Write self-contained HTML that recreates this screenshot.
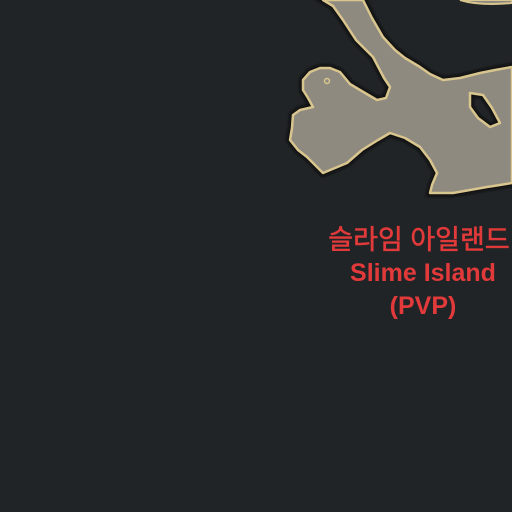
<html><head><style>
body{margin:0;width:512px;height:512px;background:#212427;overflow:hidden;position:relative}
.t{position:absolute;left:293px;width:260px;text-align:center;color:#e23a3a;font-family:"Liberation Sans","Noto Sans CJK KR",sans-serif;font-weight:bold;white-space:nowrap;line-height:30px}
</style></head><body>
<svg width="512" height="512" style="position:absolute;left:0;top:0">
<defs><filter id="b"><feGaussianBlur stdDeviation="1.2"/></filter></defs>
<g>
<path d="M323,0 L333,6 L343,20 L356,40 L373,57 L384,78 L390,87 L386,98 L377,100 L360,90 L350,84 L340,72 L330,68 L320,68 L310,72 L303,80 L303,90 L308,98 L313,107 L300,110 L293,115 L292,128 L290,140 L298,150 L307,157 L315,165 L323,173 L335,168 L347,163 L362,150 L378,140 L390,133 L405,138 L420,147 L430,160 L437,173 L432,185 L430,193 L453,193 L470,190 L487,187 L500,185 L512,183 L512,67 L495,70 L480,73 L460,78 L443,80 L430,74 L420,67 L405,58 L395,50 L383,37 L372,18 L363,0 Z M470,93 L483,95 L492,108 L500,123 L490,127 L478,118 L470,107 Z" fill="#111" fill-rule="evenodd" stroke="#111" stroke-width="7" filter="url(#b)"/>
<path d="M323,0 L333,6 L343,20 L356,40 L373,57 L384,78 L390,87 L386,98 L377,100 L360,90 L350,84 L340,72 L330,68 L320,68 L310,72 L303,80 L303,90 L308,98 L313,107 L300,110 L293,115 L292,128 L290,140 L298,150 L307,157 L315,165 L323,173 L335,168 L347,163 L362,150 L378,140 L390,133 L405,138 L420,147 L430,160 L437,173 L432,185 L430,193 L453,193 L470,190 L487,187 L500,185 L512,183 L512,67 L495,70 L480,73 L460,78 L443,80 L430,74 L420,67 L405,58 L395,50 L383,37 L372,18 L363,0 Z M470,93 L483,95 L492,108 L500,123 L490,127 L478,118 L470,107 Z" fill="#8e8a7f" fill-rule="evenodd" stroke="#d9c58e" stroke-width="2.5" stroke-linejoin="round"/>
<circle cx="327" cy="81" r="2.5" fill="none" stroke="#d9c58e" stroke-width="1.5"/>
<path d="M460,0 Q480,6 512,3 L512,0 Z" fill="#8e8a7f" stroke="#d9c58e" stroke-width="2"/>
</g>
</svg>
<div class="t" style="top:225px;font-size:27px;left:289px;font-weight:normal;-webkit-text-stroke:0.6px #e23a3a">슬라임 아일랜드</div>
<div class="t" style="top:258px;font-size:25px">Slime Island</div>
<div class="t" style="top:291px;font-size:25px">(PVP)</div>
</body></html>
